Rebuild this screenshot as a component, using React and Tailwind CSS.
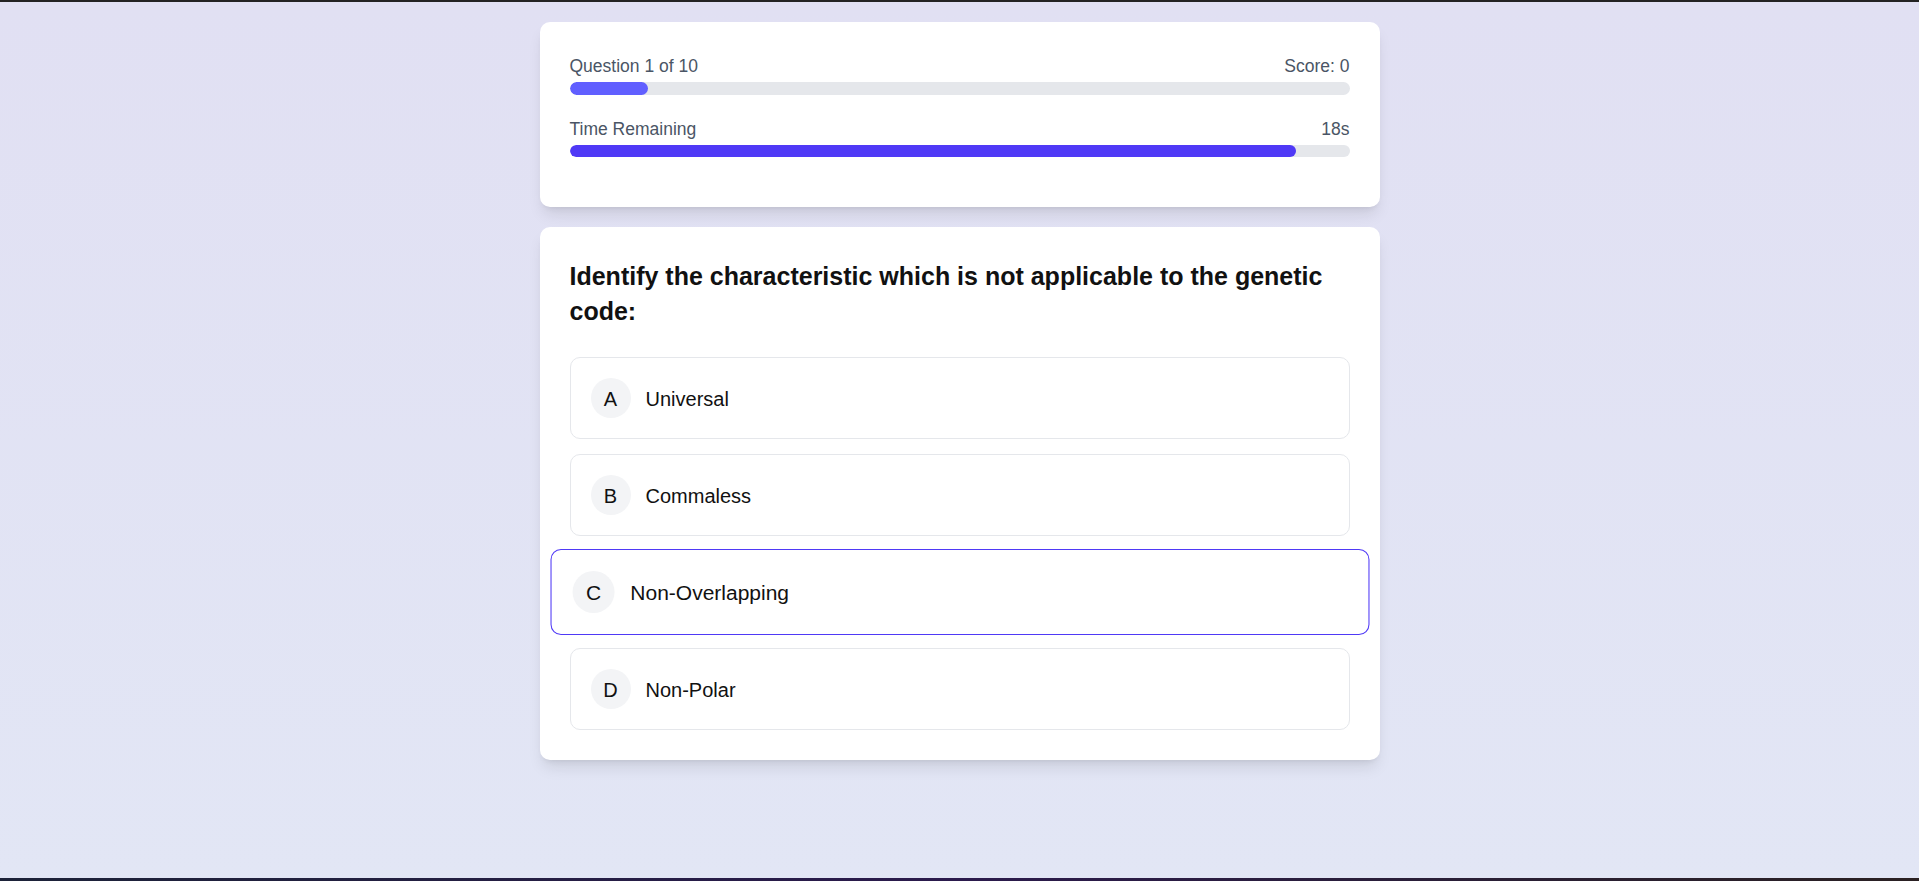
import React, { useState } from 'react';

const question = {
  text: 'Identify the characteristic which is not applicable to the genetic code:',
  options: ['Universal', 'Commaless', 'Non-Overlapping', 'Non-Polar'],
};

const letters = ['A', 'B', 'C', 'D'];

const ProgressRow = ({ label, right, percent, barClass }) => (
  <div className="mb-[20px]">
    <div className="flex justify-between text-[17.5px] leading-[25px] text-gray-600 pt-[2px] mb-[3px]">
      <span>{label}</span>
      <span>{right}</span>
    </div>
    <div className="w-full h-[12.5px] bg-gray-200 rounded-full overflow-hidden">
      <div className={`h-full rounded-full ${barClass}`} style={{ width: `${percent}%` }} />
    </div>
  </div>
);

const App = () => {
  const [hovered, setHovered] = useState(2);
  const current = 1;
  const total = 10;
  const score = 0;
  const timeLeft = 18;

  return (
    <div className="min-h-screen flex flex-col bg-[#e2e3f4] font-['Liberation_Sans',Arial,sans-serif]">
      <div className="h-[2px] bg-[#232323]" />
      <div className="flex-1 pt-[20px] bg-gradient-to-b from-[#e1e0f3] to-[#e2e6f5]">
        <div className="w-[840px] mx-auto">
          {/* progress card */}
          <div className="bg-white rounded-[10px] shadow-lg px-[30px] pt-[30px] pb-[30px] mb-[20px]">
            <ProgressRow
              label={`Question ${current} of ${total}`}
              right={`Score: ${score}`}
              percent={(current / total) * 100}
              barClass="bg-indigo-500"
            />
            <ProgressRow
              label="Time Remaining"
              right={`${timeLeft}s`}
              percent={93.2}
              barClass="bg-indigo-600"
            />
          </div>

          {/* question card */}
          <div className="bg-white rounded-[10px] shadow-lg p-[30px]">
            <h2 className="text-[25px] leading-[35px] font-semibold text-[#111] pt-[2px] mb-[28px]">
              {question.text}
            </h2>
            <div className="flex flex-col gap-[15px]">
              {question.options.map((opt, i) => (
                <button
                  key={opt}
                  onMouseEnter={() => setHovered(i)}
                  className={`w-full flex items-center text-left p-[20px] rounded-[10px] border bg-white transition-transform ${
                    hovered === i ? 'border-indigo-600 scale-105' : 'border-gray-200'
                  }`}
                >
                  <span className="w-[40px] h-[40px] rounded-full bg-gray-100 flex items-center justify-center text-[20px] text-[#111] pt-[2px] mr-[15px] shrink-0">
                    {letters[i]}
                  </span>
                  <span className="text-[20px] leading-[28px] text-[#111] pt-[2px]">{opt}</span>
                </button>
              ))}
            </div>
          </div>
        </div>
      </div>
      <div className="h-[3px] bg-gradient-to-r from-[#1c2238] via-[#2b1a4d] to-[#2a2022]" />
    </div>
  );
};

export default App;
